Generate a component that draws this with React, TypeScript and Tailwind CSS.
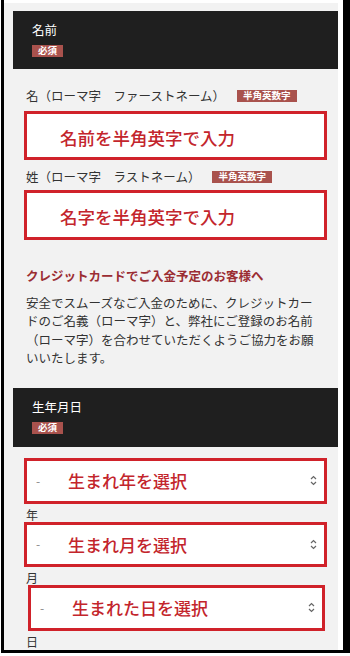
const jp = { fontFamily: '"Noto Sans CJK JP", "Noto Sans", sans-serif' }

const Badge = ({ children }: { children: string }) => (
  <span className="inline-flex items-center h-[12px] px-[6px] bg-[#a9524d] text-white text-[9.5px] font-bold leading-none">
    {children}
  </span>
)

const SectionHeader = ({ title, h }: { title: string; h: string }) => (
  <div className={`${h} bg-[#1f1f1f] pt-[10px] pl-[19px]`}>
    <div className="text-[12.5px] leading-[17px] text-white">{title}</div>
    <div className="mt-[7px] flex">
      <Badge>必須</Badge>
    </div>
  </div>
)

const NameField = ({ label, hint, mt, gap, h }: { label: string; hint: string; mt: string; gap: string; h: string }) => (
  <>
    <div className={`${mt} h-[17px] pl-[13px] flex items-center`}>
      <span className="text-[12.5px] leading-[17px] text-[#333]">{label}</span>
      <span className="ml-[12px] flex">
        <Badge>半角英数字</Badge>
      </span>
    </div>
    <div className={`${gap} ${h} mx-[11px] bg-white border-[3px] border-[#d0222a] flex items-center pl-[33px] pt-[4px]`}>
      <span className="text-[17.5px] font-medium text-[#c3252c] leading-none">{hint}</span>
    </div>
  </>
)

const Chevron = () => (
  <svg width="7" height="11" viewBox="0 0 7 11" fill="none" stroke="#666" strokeWidth="1.2">
    <path d="M1 4 L3.5 1.5 L6 4" />
    <path d="M1 7 L3.5 9.5 L6 7" />
  </svg>
)

const DateSelect = ({ hint, unit, h, mx }: { hint: string; unit: string; h: string; mx: string }) => (
  <>
    <div className={`${h} ${mx} bg-white border-[3px] border-[#d0222a] flex items-center pl-[9px] pr-[7px]`}>
      <span className="text-[12px] text-[#888] w-[32px]">-</span>
      <span className="text-[17px] font-medium text-[#c3252c] leading-none">{hint}</span>
      <span className="ml-auto flex">
        <Chevron />
      </span>
    </div>
    <div className="h-[18px] pt-[4px] pl-[13px] text-[12px] leading-[14px] text-[#333]">{unit}</div>
  </>
)

const notice = [
  '安全でスムーズなご入金のために、クレジットカー',
  'ドのご名義（ローマ字）と、弊社にご登録のお名前',
  '（ローマ字）を合わせていただくようご協力をお願',
  'いいたします。',
]

export default function App() {
  return (
    <div className="w-[350px] h-[656px] bg-white pl-px" style={jp}>
      <div className="h-[653px] border-l-[3px] border-r-[7px] border-b-[3px] border-black flex bg-white">
        <div className="w-[334px] h-full bg-[#f2f2f2] border-t-[3px] border-t-white pt-[8px] pl-[9px]">
          <SectionHeader title="名前" h="h-[58px]" />

          <NameField label="名（ローマ字　ファーストネーム）" hint="名前を半角英字で入力" mt="mt-[18px]" gap="mt-[7px]" h="h-[49px]" />
          <NameField label="姓（ローマ字　ラストネーム）" hint="名字を半角英字で入力" mt="mt-[8px]" gap="mt-[5px]" h="h-[50px]" />

          <div className="mt-[27px] pl-[13px]">
            <h3 className="text-[12.5px] leading-[18px] font-bold text-[#9b2d33] whitespace-nowrap">
              クレジットカードでご入金予定のお客様へ
            </h3>
            <p className="mt-[9px] text-[12.5px] leading-[18.4px] text-[#333]">
              {notice.map((line) => (
                <span key={line} className="block whitespace-nowrap">
                  {line}
                </span>
              ))}
            </p>
          </div>

          <div className="mt-[20px]">
            <SectionHeader title="生年月日" h="h-[59px]" />
          </div>

          <div className="mt-[11px]">
            <DateSelect hint="生まれ年を選択" unit="年" h="h-[46px]" mx="mx-[11px]" />
            <DateSelect hint="生まれ月を選択" unit="月" h="h-[45px]" mx="mx-[11px]" />
            <DateSelect hint="生まれた日を選択" unit="日" h="h-[46px]" mx="ml-[15px] mr-[13px]" />
          </div>
        </div>
      </div>
    </div>
  )
}
